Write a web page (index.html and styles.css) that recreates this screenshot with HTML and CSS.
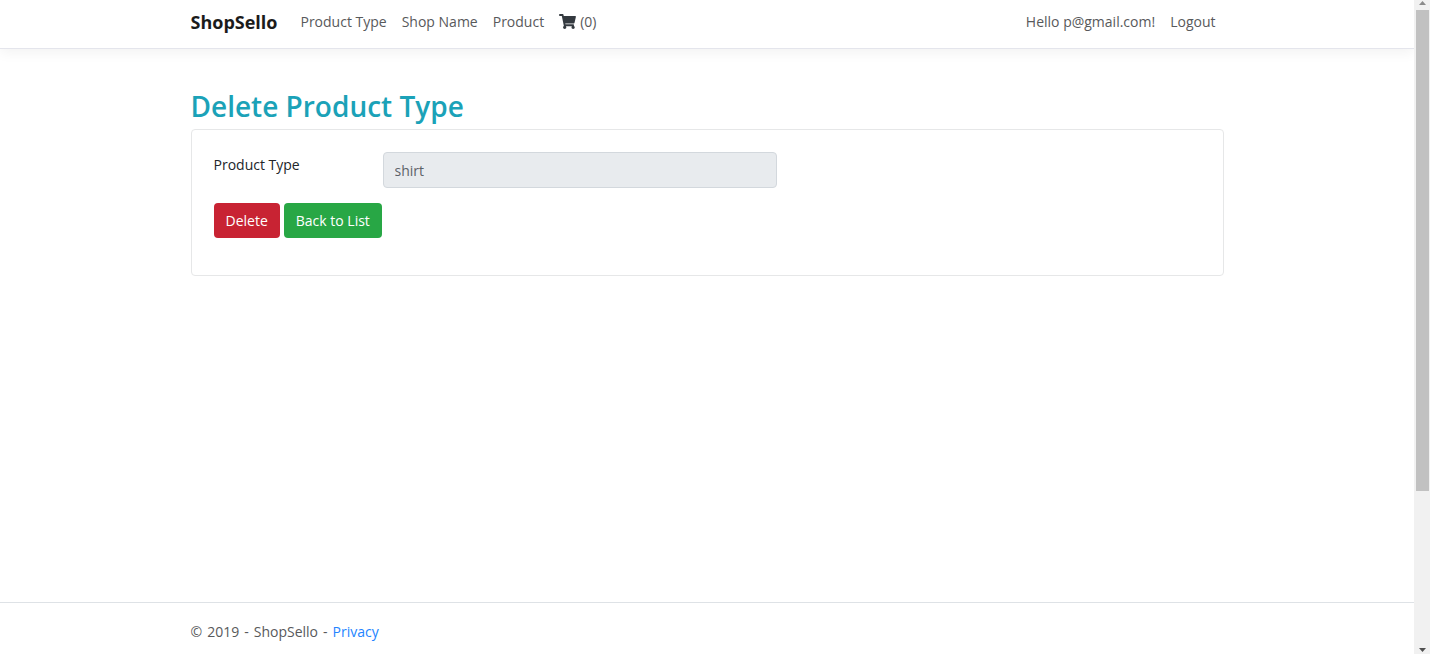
FILE: index.html
```html
<!DOCTYPE html>
<html lang="en">
<head>
<meta charset="utf-8">
<meta name="viewport" content="width=device-width, initial-scale=1">
<title>Delete Product Type - ShopSello</title>
<link rel="stylesheet" href="styles.css">
</head>
<body>
<div class="page">
  <header class="site-header">
    <nav class="container navbar">
      <a class="brand" href="#">ShopSello</a>
      <div class="nav-links">
        <a class="nav-link" href="#">Product Type</a>
        <a class="nav-link" href="#">Shop Name</a>
        <a class="nav-link" href="#">Product</a>
        <a class="nav-link cart" href="#" aria-label="Cart (0)"><svg class="cart-icon" viewBox="0 0 576 512" aria-hidden="true"><path d="M528.12 301.319l47.273-208C578.806 78.301 567.391 64 551.99 64H159.208l-9.166-44.81C147.758 8.021 137.93 0 126.529 0H24C10.745 0 0 10.745 0 24v16c0 13.255 10.745 24 24 24h69.883l70.248 343.435C147.325 417.1 136 435.222 136 456c0 30.928 25.072 56 56 56s56-25.072 56-56c0-15.674-6.447-29.835-16.824-40h209.647C430.447 426.165 424 440.326 424 456c0 30.928 25.072 56 56 56s56-25.072 56-56c0-22.172-12.888-41.332-31.579-50.405l5.517-24.276c3.413-15.018-8.002-29.319-23.403-29.319H218.117l-6.545-32h293.145c11.206 0 20.92-7.754 23.403-18.681z"/></svg><span>(0)</span></a>
      </div>
      <div class="account">
        <a class="nav-link greeting" href="#">Hello p@gmail.com!</a>
        <button class="nav-link logout" type="button">Logout</button>
      </div>
    </nav>
  </header>
  <main class="container content">
    <h1 class="title">Delete Product Type</h1>
    <form class="card">
      <div class="field">
        <label class="field-label" for="product-type">Product Type</label>
        <input class="field-input" id="product-type" type="text" value="shirt" disabled>
      </div>
      <div class="actions">
        <button class="btn btn-danger" type="button">Delete</button>
        <a class="btn btn-success" href="#">Back to List</a>
      </div>
    </form>
  </main>
  <footer class="site-footer">
    <div class="container footer-line">
      <span>©</span>
      <span>2019</span>
      <span>-</span>
      <span>ShopSello</span>
      <span>-</span>
      <a class="privacy" href="#">Privacy</a>
    </div>
  </footer>
</div>
<div class="scrollbar" aria-hidden="true">
  <svg class="arrow arrow-up" viewBox="0 0 7 4"><path d="M0 4L3.500 0L7 4z"/></svg>
  <div class="track"><div class="thumb"></div></div>
  <svg class="arrow arrow-down" viewBox="0 0 7 4"><path d="M0 0L3.500 4L7 0z"/></svg>
</div>
</body>
</html>
```
FILE: styles.css
```css
* { box-sizing: border-box; }

body {
  margin: 0;
  height: 100vh;
  display: flex;
  overflow: hidden;
  font-family: "Segoe UI", "Open Sans", "Noto Sans", sans-serif;
  font-size: 14px;
  line-height: 22px;
  color: #212529;
  background: #fff;
}

a { text-decoration: none; }

.page {
  flex: 1;
  min-width: 0;
  display: flex;
  flex-direction: column;
}

.container {
  width: 100%;
  max-width: 1033px;
  margin: 0 auto;
}

.site-header {
  border-bottom: 1px solid #e4e5ec;
  box-shadow: 0 4px 12px rgba(0, 0, 0, 0.05);
}

.navbar {
  display: flex;
  align-items: center;
  padding: 3px 0 7px;
}

.brand {
  margin-right: 23px;
  font-size: 18px;
  font-weight: 700;
  line-height: 38px;
  color: #1b1b1b;
}

.nav-links,
.account {
  display: flex;
  align-items: center;
  gap: 15px;
}

.account {
  margin-left: auto;
  padding-right: 8px;
}

.nav-link {
  color: #58595b;
}

.cart {
  display: flex;
  align-items: center;
  gap: 4px;
}

.cart-icon {
  width: 17px;
  height: 15px;
  margin-bottom: 2px;
  fill: #343a40;
}

.logout {
  padding: 0;
  border: 0;
  background: none;
  font: inherit;
}

.content {
  flex: 1;
  padding-top: 39px;
}

.title {
  margin: 0 0 5px;
  font-size: 28px;
  font-weight: 600;
  line-height: 36px;
  color: #1ba2b8;
}

.card {
  padding: 22px 22px 37px;
  border: 1px solid #e6e7e8;
  border-radius: 4px;
}

.field {
  display: grid;
  grid-template-columns: 169px 40%;
  margin-bottom: 15px;
}

.field-label {
  padding-top: 2px;
}

.field-input {
  width: 100%;
  height: 36px;
  padding: 0 11px;
  border: 1px solid #d3d8dd;
  border-radius: 4px;
  font: inherit;
  color: #5c6268;
  background: #e8ebee;
}

.actions {
  display: flex;
  gap: 4px;
}

.btn {
  padding: 7px 12px 6px;
  border: 0;
  border-radius: 4px;
  font: inherit;
  color: #fff;
}

.btn-danger { background: #c82333; }
.btn-success { background: #28a745; }

.site-footer {
  padding: 18px 0 11px;
  border-top: 1px solid #dee2e6;
  color: #58595b;
}

.footer-line {
  display: flex;
  gap: 5px;
}

.privacy { color: #2384ff; }

.scrollbar {
  width: 16px;
  display: flex;
  flex-direction: column;
  align-items: center;
  background: #f1f1f1;
}

.arrow {
  width: 7px;
  height: 4px;
}

.arrow-up {
  margin: 1px 0 5px;
  fill: #8b8b8b;
}

.arrow-down {
  margin: 5px 0 2px;
  fill: #505050;
}

.track {
  flex: 1;
  width: 13px;
}

.thumb {
  height: 76%;
  background: #c1c1c1;
}
```
